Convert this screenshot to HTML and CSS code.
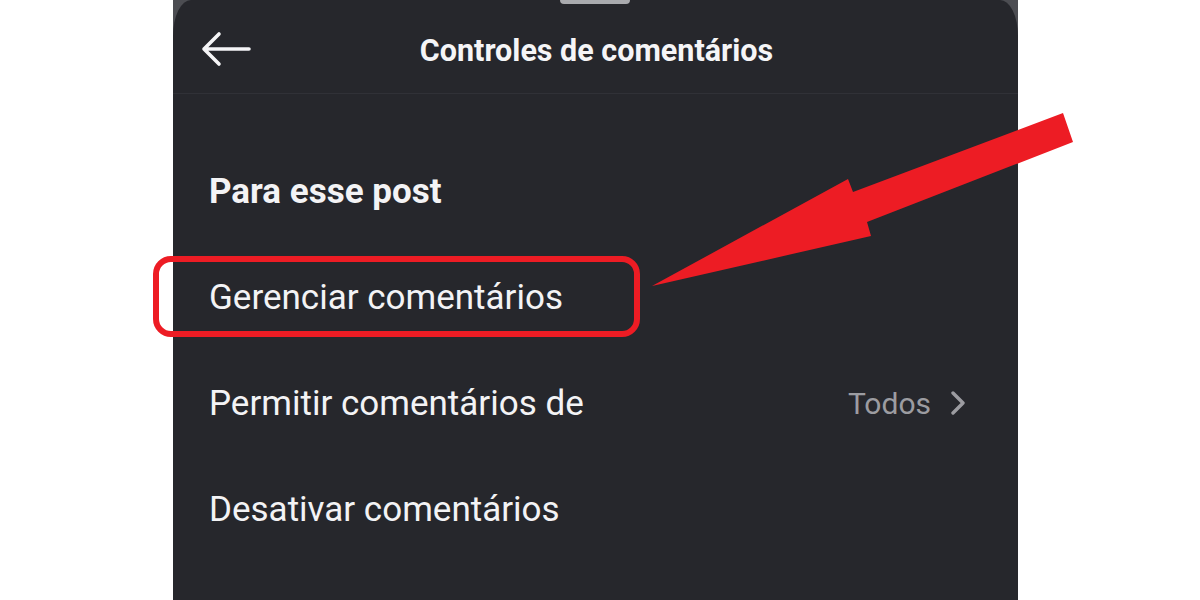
FILE: index.html
```html
<!DOCTYPE html>
<html lang="pt">
<head>
<meta charset="utf-8">
<link rel="stylesheet" href="styles.css">
</head>
<body>
<div class="page">
  <div class="sheet-wrap">
    <div class="sheet">
      <div class="handle"></div>
      <header class="topbar">
        <svg class="back" width="50" height="36" viewBox="0 0 50 36">
          <path d="M3 18 H48 M18 3 L3 18 L18 33" fill="none" stroke="#f5f5f7" stroke-width="3.6" stroke-linecap="round" stroke-linejoin="round"/>
        </svg>
        <h1 class="title">Controles de comentários</h1>
      </header>
      <ul class="list">
        <li class="row row-head">Para esse post</li>
        <li class="row row-highlight">Gerenciar comentários</li>
        <li class="row">
          <span>Permitir comentários de</span>
          <span class="value">Todos
            <svg class="chev" width="16" height="24" viewBox="0 0 16 24"><path d="M3 2 L13 12 L3 22" fill="none" stroke="#9c9ca1" stroke-width="3.4" stroke-linecap="round" stroke-linejoin="round"/></svg>
          </span>
        </li>
        <li class="row">Desativar comentários</li>
      </ul>
    </div>
  </div>
  <svg class="pointer" width="1200" height="600" viewBox="0 0 1200 600">
    <polygon points="1063,113 1073,142 867,222 871,236 652,286 848,179 853,192" fill="#ed1c24"/>
  </svg>
</div>
</body>
</html>
```
FILE: styles.css
```css
* { box-sizing: border-box; }
html, body { margin: 0; padding: 0; background: #ffffff; }
body { font-family: Roboto, "Noto Sans", sans-serif; }
.page {
  position: relative;
  width: 1200px;
  height: 600px;
  overflow: hidden;
  padding-left: 173px;
}
.sheet-wrap {
  width: 845px;
  height: 600px;
  background: #4c4d52;
}
.sheet {
  position: relative;
  height: 600px;
  background: #26272c;
  border-radius: 18px 18px 0 0 / 36px 36px 0 0;
}
.handle {
  position: absolute;
  left: 387px;
  top: -6px;
  width: 70px;
  height: 10px;
  border-radius: 4px;
  background: #a9aaae;
}
.topbar {
  height: 94px;
  padding-top: 7px;
  border-bottom: 1px solid #303137;
  display: flex;
  align-items: center;
  justify-content: center;
  position: relative;
}
.back {
  position: absolute;
  left: 28px;
  top: 31px;
}
.title {
  margin: 0;
  font-size: 30.5px;
  font-weight: 700;
  color: #f5f5f7;
  margin-left: 2px;
}
.list {
  list-style: none;
  margin: 0;
  padding: 44px 52px 0 36px;
}
.row {
  height: 106px;
  display: flex;
  align-items: center;
  justify-content: space-between;
  font-size: 35px;
  color: #f3f3f5;
}
.row-head { font-weight: 700; }
.row-highlight {
  position: relative;
}
.row-highlight::before {
  content: "";
  position: absolute;
  left: -56px;
  width: 475px;
  top: 12px;
  bottom: 13px;
  border: 6px solid #ed1c24;
  border-radius: 18px;
}
.value {
  display: flex;
  align-items: center;
  gap: 19px;
  font-size: 30px;
  color: #9c9ca1;
}
.pointer {
  position: absolute;
  left: 0;
  top: 0;
  pointer-events: none;
}
```
